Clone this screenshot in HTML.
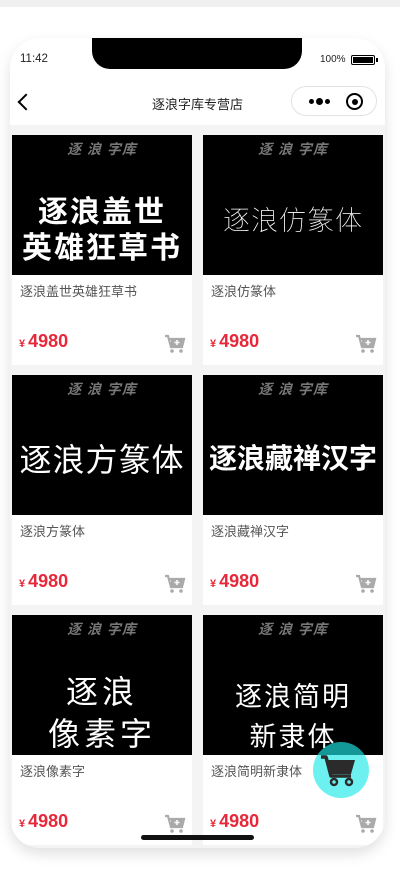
<!DOCTYPE html>
<html><head><meta charset="utf-8">
<style>
*{margin:0;padding:0;box-sizing:border-box}
body{width:400px;height:878px;background:#fff;font-family:"Liberation Sans","Noto Sans CJK SC",sans-serif;position:relative;overflow:hidden}
.topstrip{position:absolute;left:0;top:0;width:400px;height:7px;background:#f0f0f0}
.frame{position:absolute;left:10px;top:38px;width:375px;height:810px;border-radius:30px;background:#f4f4f4;overflow:hidden;box-shadow:0 6px 14px rgba(0,0,0,0.12)}
.status{position:absolute;left:0;top:0;width:375px;height:42px;background:#fff}
.notch{position:absolute;left:82px;top:-1px;width:210px;height:32px;background:#000;border-radius:0 0 18px 18px}
.time{position:absolute;left:10px;top:15px;font-size:11.5px;color:#222}
.batt{position:absolute;left:310px;top:16px;font-size:10px;color:#222}
.bicon{position:absolute;left:341px;top:17px;width:24px;height:10px;border:1.5px solid #000;border-radius:2px;padding:1px}
.bicon i{display:block;width:100%;height:100%;background:#000}
.bicon:after{content:"";position:absolute;right:-4px;top:2px;width:2px;height:4px;background:#000}
.nav{position:absolute;left:0;top:42px;width:375px;height:45px;background:#fff}
.back{position:absolute;left:10px;top:58px;width:12px;height:12px;border-left:2px solid #000;border-bottom:2px solid #000;transform:rotate(45deg)}
.title{position:absolute;left:0;width:375px;top:56px;text-align:center;font-size:13px;color:#222}
.cap{position:absolute;left:281px;top:48px;width:86px;height:30px;border:1px solid #e2e2e2;border-radius:15px;background:#fff}
.dots{position:absolute;left:17px;top:10px}
.dots i{position:absolute;border-radius:50%;background:#000}
.target{position:absolute;left:54px;top:6px;width:17px;height:17px;border:2px solid #000;border-radius:50%}
.target:after{content:"";position:absolute;left:3.5px;top:3.5px;width:6px;height:6px;border-radius:50%;background:#000}
.card{position:absolute;width:180px;height:230px;background:#fff}
.img{position:absolute;left:0;top:0;width:180px;height:140px;background:#000;overflow:hidden;color:#fff;text-align:center}
.logo{position:absolute;left:0;width:180px;top:4px;font-size:14px;font-weight:bold;color:#777;letter-spacing:1px;font-style:italic}
.name{position:absolute;left:8px;top:146px;font-size:13px;color:#555}
.price{position:absolute;left:7px;top:196px;color:#e8283a;font-weight:bold;font-size:18px}
.price small{font-size:11px;margin-right:3px}
.cart{position:absolute;left:152px;top:199px}
.fab{position:absolute;left:303px;top:704px;width:56px;height:56px;border-radius:50%;background:rgba(31,232,232,0.65)}
.home{position:absolute;left:131px;top:797px;width:113px;height:5px;border-radius:3px;background:#111}
</style></head><body>
<div class="topstrip"></div>
<div class="frame">
 <div class="status"><div class="notch"></div><div class="time">11:42</div><div class="batt">100%</div><div class="bicon"><i></i></div></div>
 <div class="nav"></div>
 <div class="back"></div>
 <div class="title">逐浪字库专营店</div>
 <div class="cap"><div class="dots"><i style="left:0;top:2px;width:5px;height:5px"></i><i style="left:7px;top:1px;width:7px;height:7px"></i><i style="left:16px;top:2px;width:5px;height:5px"></i></div><div class="target"></div></div>

 <div class="card" style="left:2px;top:97px"><div class="img"><div class="logo">逐 浪 字库</div>
  <div style="position:absolute;left:0;width:180px;top:60px;font-size:30px;font-weight:bold;line-height:36px;letter-spacing:2px">逐浪盖世<br>英雄狂草书</div></div>
  <div class="name">逐浪盖世英雄狂草书</div><div class="price"><small>¥</small>4980</div>
  <svg class="cart" width="22" height="20" viewBox="0 0 22 20"><path d="M1 2h3l3 11h11l2-8H6" fill="none" stroke="#aaa" stroke-width="2.2"/><rect x="7" y="5" width="12" height="7" fill="#aaa"/><path d="M13 6v5M10.5 8.5h5" stroke="#fff" stroke-width="1.5"/><circle cx="8" cy="17" r="1.8" fill="#aaa"/><circle cx="17" cy="17" r="1.8" fill="#aaa"/></svg></div>
 <div class="card" style="left:193px;top:97px"><div class="img"><div class="logo">逐 浪 字库</div>
  <div style="position:absolute;left:0;width:180px;top:64px;font-size:27px;font-weight:100;letter-spacing:1px">逐浪仿篆体</div></div>
  <div class="name">逐浪仿篆体</div><div class="price"><small>¥</small>4980</div>
  <svg class="cart" width="22" height="20" viewBox="0 0 22 20"><path d="M1 2h3l3 11h11l2-8H6" fill="none" stroke="#aaa" stroke-width="2.2"/><rect x="7" y="5" width="12" height="7" fill="#aaa"/><path d="M13 6v5M10.5 8.5h5" stroke="#fff" stroke-width="1.5"/><circle cx="8" cy="17" r="1.8" fill="#aaa"/><circle cx="17" cy="17" r="1.8" fill="#aaa"/></svg></div>

 <div class="card" style="left:2px;top:337px"><div class="img"><div class="logo">逐 浪 字库</div>
  <div style="position:absolute;left:0;width:180px;top:60px;font-size:32px;letter-spacing:1px">逐浪方篆体</div></div>
  <div class="name">逐浪方篆体</div><div class="price"><small>¥</small>4980</div>
  <svg class="cart" width="22" height="20" viewBox="0 0 22 20"><path d="M1 2h3l3 11h11l2-8H6" fill="none" stroke="#aaa" stroke-width="2.2"/><rect x="7" y="5" width="12" height="7" fill="#aaa"/><path d="M13 6v5M10.5 8.5h5" stroke="#fff" stroke-width="1.5"/><circle cx="8" cy="17" r="1.8" fill="#aaa"/><circle cx="17" cy="17" r="1.8" fill="#aaa"/></svg></div>
 <div class="card" style="left:193px;top:337px"><div class="img"><div class="logo">逐 浪 字库</div>
  <div style="position:absolute;left:0;width:180px;top:62px;font-size:28px;font-weight:bold">逐浪藏禅汉字</div></div>
  <div class="name">逐浪藏禅汉字</div><div class="price"><small>¥</small>4980</div>
  <svg class="cart" width="22" height="20" viewBox="0 0 22 20"><path d="M1 2h3l3 11h11l2-8H6" fill="none" stroke="#aaa" stroke-width="2.2"/><rect x="7" y="5" width="12" height="7" fill="#aaa"/><path d="M13 6v5M10.5 8.5h5" stroke="#fff" stroke-width="1.5"/><circle cx="8" cy="17" r="1.8" fill="#aaa"/><circle cx="17" cy="17" r="1.8" fill="#aaa"/></svg></div>

 <div class="card" style="left:2px;top:577px"><div class="img"><div class="logo">逐 浪 字库</div>
  <div style="position:absolute;left:0;width:180px;top:56px;font-size:32px;line-height:42px;letter-spacing:4px">逐浪<br>像素字</div></div>
  <div class="name">逐浪像素字</div><div class="price"><small>¥</small>4980</div>
  <svg class="cart" width="22" height="20" viewBox="0 0 22 20"><path d="M1 2h3l3 11h11l2-8H6" fill="none" stroke="#aaa" stroke-width="2.2"/><rect x="7" y="5" width="12" height="7" fill="#aaa"/><path d="M13 6v5M10.5 8.5h5" stroke="#fff" stroke-width="1.5"/><circle cx="8" cy="17" r="1.8" fill="#aaa"/><circle cx="17" cy="17" r="1.8" fill="#aaa"/></svg></div>
 <div class="card" style="left:193px;top:577px"><div class="img"><div class="logo">逐 浪 字库</div>
  <div style="position:absolute;left:0;width:180px;top:62px;font-size:27px;line-height:40px;letter-spacing:2px">逐浪简明<br>新隶体</div></div>
  <div class="name">逐浪简明新隶体</div><div class="price"><small>¥</small>4980</div>
  <svg class="cart" width="22" height="20" viewBox="0 0 22 20"><path d="M1 2h3l3 11h11l2-8H6" fill="none" stroke="#aaa" stroke-width="2.2"/><rect x="7" y="5" width="12" height="7" fill="#aaa"/><path d="M13 6v5M10.5 8.5h5" stroke="#fff" stroke-width="1.5"/><circle cx="8" cy="17" r="1.8" fill="#aaa"/><circle cx="17" cy="17" r="1.8" fill="#aaa"/></svg></div>

 <div class="fab"><svg width="56" height="56" viewBox="0 0 56 56"><path d="M8 15h5l5 19h20" fill="none" stroke="#2b2b2b" stroke-width="3.5" stroke-linejoin="round"/><path d="M14 18h28l-4 14H18z" fill="#2b2b2b"/><circle cx="21" cy="40" r="3" fill="none" stroke="#2b2b2b" stroke-width="2.5"/><circle cx="36" cy="40" r="3" fill="none" stroke="#2b2b2b" stroke-width="2.5"/></svg></div>
 <div class="home"></div>
</div>
</body></html>
